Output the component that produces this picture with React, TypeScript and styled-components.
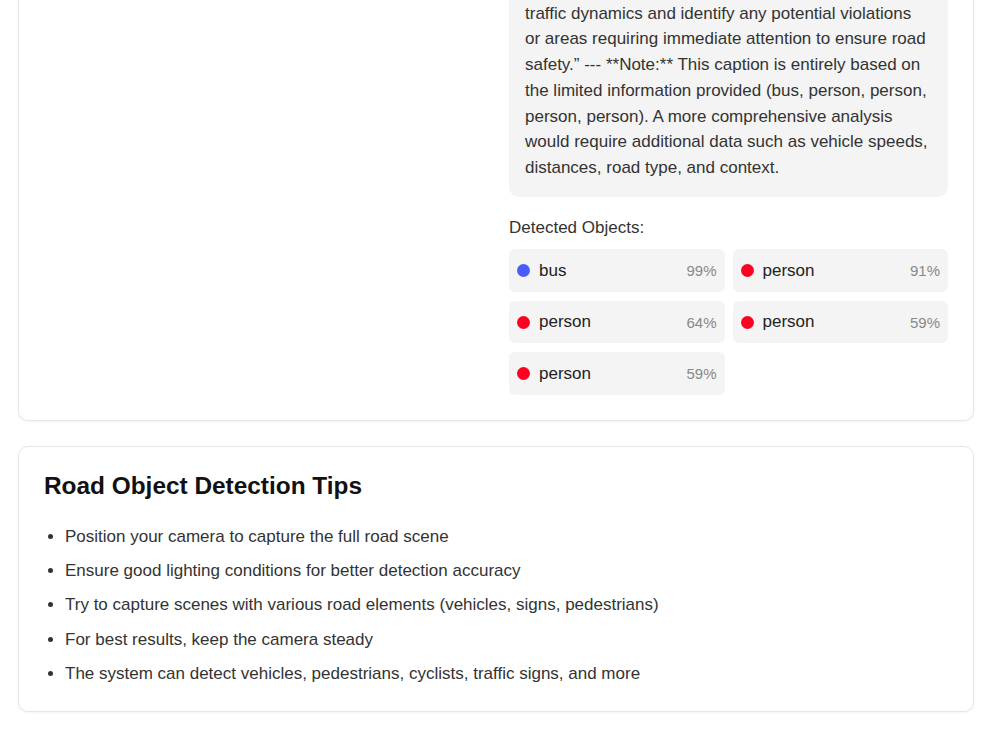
import React from "react";
import styled, { createGlobalStyle } from "styled-components";

const GlobalStyle = createGlobalStyle`
  html, body {
    margin: 0;
    padding: 0;
    background: #ffffff;
  }
  body {
    font-family: "Liberation Sans", Arial, sans-serif;
    color: #222;
  }
`;

// the results card sits partly above the fold, the page is scrolled down
const Page = styled.div`
  display: flex;
  flex-direction: column;
  gap: 25px;
  padding: 0 26px 40px 18px;
  margin-top: -67px;
`;

const Card = styled.section`
  background: #fff;
  border: 1px solid #e6e6e6;
  border-radius: 10px;
  box-shadow: 0 1px 3px rgba(0, 0, 0, 0.05);
  padding: 25px;
`;

const ResultGrid = styled.div`
  display: grid;
  grid-template-columns: 1fr 1fr;
  gap: 26px;
`;

const Preview = styled.div``;

const Caption = styled.div`
  background: #f4f4f4;
  border-radius: 10px;
  padding: 16px 18px 16px 16px;
  font-size: 17px;
  line-height: 25.7px;
  color: #333;
`;

const Para = styled.p`
  margin: 0;
`;

const Label = styled.div`
  margin: 18px 0 9px;
  font-size: 17px;
  line-height: 25.5px;
  color: #333;
`;

const ObjectGrid = styled.div`
  display: grid;
  grid-template-columns: 1fr 1fr;
  gap: 9px 8px;
`;

const Chip = styled.div`
  box-sizing: border-box;
  display: flex;
  align-items: center;
  height: 42.5px;
  padding: 1px 8px 0;
  background: #f4f4f4;
  border-radius: 6px;
`;

const Dot = styled.span<{ $color: string }>`
  width: 13px;
  height: 13px;
  border-radius: 50%;
  background: ${(p) => p.$color};
  margin-right: 9px;
  flex-shrink: 0;
`;

const Name = styled.span`
  flex: 1;
  font-size: 17px;
  color: #222;
`;

const Score = styled.span`
  font-size: 15px;
  color: #888;
`;

const Title = styled.h2`
  margin: 0 0 24px;
  font-size: 24.4px;
  line-height: 28px;
  font-weight: 700;
  color: #111;
`;

const Tips = styled.ul`
  margin: 0;
  padding-left: 21px;
`;

const Tip = styled.li`
  font-size: 17px;
  line-height: 25.5px;
  color: #333;
  & + & {
    margin-top: 8.8px;
  }
`;

const detections = [
  { name: "bus", score: 99, color: "#4a5cff" },
  { name: "person", score: 91, color: "#ff0022" },
  { name: "person", score: 64, color: "#ff0022" },
  { name: "person", score: 59, color: "#ff0022" },
  { name: "person", score: 59, color: "#ff0022" },
];

const tips = [
  "Position your camera to capture the full road scene",
  "Ensure good lighting conditions for better detection accuracy",
  "Try to capture scenes with various road elements (vehicles, signs, pedestrians)",
  "For best results, keep the camera steady",
  "The system can detect vehicles, pedestrians, cyclists, traffic signs, and more",
];

export default function App() {
  return (
    <>
      <GlobalStyle />
      <Page>
        <Card>
          <ResultGrid>
            <Preview />
            <div>
              <Caption>
                <Para>near the stop. Observers should assess the</Para>
                <Para>
                  traffic dynamics and identify any potential violations or
                  areas requiring immediate attention to ensure road safety.”
                  --- **Note:** This caption is entirely based on the limited
                  information provided (bus, person, person, person, person). A
                  more comprehensive analysis would require additional data
                  such as vehicle speeds, distances, road type, and context.
                </Para>
              </Caption>
              <Label>Detected Objects:</Label>
              <ObjectGrid>
                {detections.map((d, i) => (
                  <Chip key={i}>
                    <Dot $color={d.color} />
                    <Name>{d.name}</Name>
                    <Score>{d.score}%</Score>
                  </Chip>
                ))}
              </ObjectGrid>
            </div>
          </ResultGrid>
        </Card>
        <Card>
          <Title>Road Object Detection Tips</Title>
          <Tips>
            {tips.map((t) => (
              <Tip key={t}>{t}</Tip>
            ))}
          </Tips>
        </Card>
      </Page>
    </>
  );
}
